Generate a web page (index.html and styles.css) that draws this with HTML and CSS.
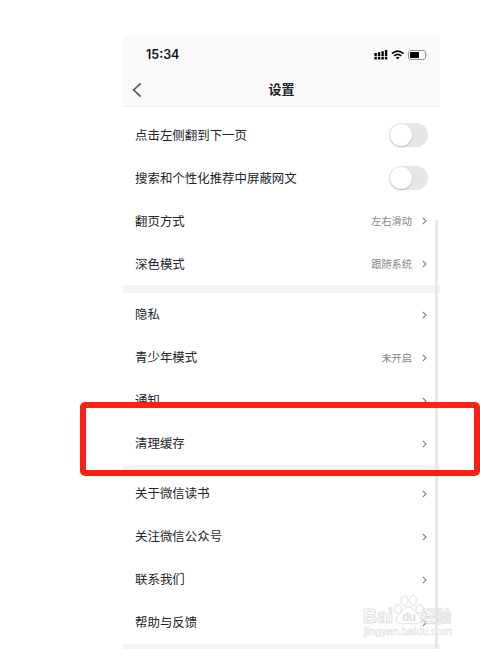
FILE: index.html
```html
<!DOCTYPE html>
<html lang="zh-CN">
  <head>
    <meta charset="UTF-8" />
    <meta name="viewport" content="width=device-width, initial-scale=1.0" />
    <title>设置</title>
    <link rel="stylesheet" href="styles.css">
  </head>
  <body>
    <div class="phone">
      <header class="header">
        <div class="status-bar">
          <span class="time">15:34</span>
          <svg class="status-icons" width="54" height="12" viewBox="0 0 54 12">
            <!-- signal -->
            <path d="M.4 4h2.400v3.200H.4zM3.900 3.200h2.400v4H3.900zM7.400 2.200h2.400v5H7.400zM10.900 1h2.400v6.200h-2.400zM.4 8h2.400v2.600H.4zM3.900 8h2.400v2.600H3.900zM7.400 8h2.400v2.600H7.400zM10.900 8h2.400v2.600h-2.400z" />
            <!-- wifi -->
            <g fill="none" stroke="#000" stroke-width="1.700">
              <path d="M18 4.600Q23.700-.2 29.400 4.600" />
              <path d="M20.200 6.900Q23.700 4 27.200 6.900" />
            </g>
            <path d="M21.700 8.300Q23.700 7 25.700 8.300L23.700 10.600z" />
            <!-- battery -->
            <rect x="34.500" y="1.500" width="17" height="9" rx="2.500" fill="#fff" stroke="#888" stroke-width=".9" />
            <rect x="36" y="3" width="9" height="6" rx=".8" />
            <path d="M52.600 4.500q1.200 1.500 0 3z" fill="#777" />
          </svg>
        </div>
        <div class="nav-bar">
          <svg class="back" width="10" height="16" viewBox="0 0 10 16">
            <path d="M8.700 1.300L1.700 8L8.700 14.700" />
          </svg>
          <h1>设置</h1>
        </div>
      </header>

      <main>
        <div class="group">
          <div class="row"><span>点击左侧翻到下一页</span><i class="switch"></i></div>
          <div class="row"><span>搜索和个性化推荐中屏蔽网文</span><i class="switch"></i></div>
          <div class="row"><span>翻页方式</span><span class="value">左右滑动</span><svg class="arrow" viewBox="0 0 5 8"><path d="M.8.8L4 4L.8 7.200" /></svg></div>
          <div class="row"><span>深色模式</span><span class="value">跟随系统</span><svg class="arrow" viewBox="0 0 5 8"><path d="M.8.8L4 4L.8 7.200" /></svg></div>
        </div>
        <div class="group">
          <div class="row"><span>隐私</span><svg class="arrow" viewBox="0 0 5 8"><path d="M.8.8L4 4L.8 7.200" /></svg></div>
          <div class="row"><span>青少年模式</span><span class="value">未开启</span><svg class="arrow" viewBox="0 0 5 8"><path d="M.8.8L4 4L.8 7.200" /></svg></div>
          <div class="row"><span>通知</span><svg class="arrow" viewBox="0 0 5 8"><path d="M.8.8L4 4L.8 7.200" /></svg></div>
          <div class="row"><span>清理缓存</span><svg class="arrow" viewBox="0 0 5 8"><path d="M.8.8L4 4L.8 7.200" /></svg></div>
        </div>
        <div class="group">
          <div class="row"><span>关于微信读书</span><svg class="arrow" viewBox="0 0 5 8"><path d="M.8.8L4 4L.8 7.200" /></svg></div>
          <div class="row"><span>关注微信公众号</span><svg class="arrow" viewBox="0 0 5 8"><path d="M.8.8L4 4L.8 7.200" /></svg></div>
          <div class="row"><span>联系我们</span><svg class="arrow" viewBox="0 0 5 8"><path d="M.8.8L4 4L.8 7.200" /></svg></div>
          <div class="row"><span>帮助与反馈</span><svg class="arrow" viewBox="0 0 5 8"><path d="M.8.8L4 4L.8 7.200" /></svg></div>
        </div>
      </main>
      <div class="scrollbar"></div>
    </div>

    <div class="highlight"></div>

    <svg class="watermark" width="96" height="46" viewBox="0 0 96 46">
      <g class="outline">
        <text x="1" y="28.500" font-size="20" textLength="30" lengthAdjust="spacingAndGlyphs">Bai</text>
        <ellipse cx="36" cy="15" rx="3.400" ry="4.300" />
        <ellipse cx="42.500" cy="6.500" rx="3.500" ry="4.800" />
        <ellipse cx="51" cy="6.500" rx="3.500" ry="4.800" />
        <ellipse cx="57.500" cy="15" rx="3.400" ry="4.300" />
        <path d="M46.500 13C41 13 40 18 36 22C31 28 36 31 46.500 29.500C57 31 62 28 57 22C53 18 52 13 46.500 13z" />
      </g>
      <text class="du" x="40" y="27" font-size="12" textLength="14">du</text>
      <text class="outline cn" x="58.500" y="28" font-size="15.500">经验</text>
      <text class="site" x="2" y="41" font-size="11" textLength="88" lengthAdjust="spacingAndGlyphs">jingyan.baidu.com</text>
    </svg>
  </body>
</html>
```

FILE: styles.css
```css
body {
  position: relative;
  height: 649px;
  margin: 0;
  overflow: hidden;
  background: #fff;
  color: #22242a;
  font-family: "Liberation Sans", "Noto Sans CJK SC", sans-serif;
}

.phone {
  position: relative;
  width: 317px;
  margin-left: 123px;
  padding-top: 36px;
}

/* Header */
.header {
  box-sizing: border-box;
  height: 71px;
  background: #fafafa;
  border-bottom: 1px solid #ececec;
}

.status-bar {
  display: flex;
  align-items: center;
  justify-content: space-between;
  height: 38px;
  padding: 0 12px 0 23px;
}

.time {
  font: 600 12.5px/38px Inter, sans-serif;
  color: #111;
}

.nav-bar {
  display: grid;
  grid-template-columns: 30px 1fr 30px;
  align-items: center;
  height: 32px;
}

.back {
  margin-left: 9px;
}

.back path,
.arrow path {
  fill: none;
  stroke: #555960;
  stroke-width: 1.7;
}

h1 {
  margin: 0;
  font-size: 13px;
  line-height: 32px;
  font-weight: 600;
  text-align: center;
}

/* Settings list */
.group {
  border-bottom: 8px solid #f3f4f6;
}

.group:first-child {
  padding-top: 6px;
}

.group:nth-child(2) {
  border-bottom-width: 7px;
}

.row {
  display: flex;
  align-items: center;
  height: 43px;
  padding: 0 12px;
  font-size: 12.45px;
  line-height: 41px;
}

.row span:first-child {
  flex: 1;
  padding-top: 2px;
}

.group:first-child .row span:first-child {
  padding-top: 4px;
}

.value {
  margin-right: 10px;
  padding-top: 2px;
  font-size: 10.2px;
  color: #85888e;
}

.arrow {
  width: 5px;
  height: 8px;
  margin-right: 1px;
}

.arrow path {
  stroke: #7c8085;
  stroke-width: 1.1;
}

.switch {
  box-sizing: border-box;
  width: 39px;
  height: 24px;
  padding: 1px;
  border-radius: 12px;
  background: #e6e6e6;
}

.switch::before {
  content: "";
  display: block;
  width: 22px;
  height: 22px;
  border-radius: 50%;
  background: #fff;
  box-shadow: 0 1px 2px rgba(0, 0, 0, 0.2);
}

.scrollbar {
  position: absolute;
  top: 220px;
  right: 2px;
  width: 3px;
  height: 440px;
  border-radius: 2px;
  background: #e8e8e9;
}

/* Red frame over the cache row */
.highlight {
  position: absolute;
  top: 402px;
  left: 80px;
  box-sizing: border-box;
  width: 400px;
  height: 74px;
  border: 6px solid #ff2011;
  border-radius: 5px;
}

.watermark {
  position: absolute;
  top: 594px;
  left: 362px;
  font-family: "Liberation Sans", "Noto Sans CJK SC", sans-serif;
  font-weight: bold;
}

.outline {
  fill: rgba(255, 255, 255, 0.6);
  stroke: #e0e0e0;
  stroke-width: 1;
}

.cn {
  fill: rgba(255, 255, 255, 0.4);
  stroke-width: 0.8;
}

.du {
  fill: #e0e0e0;
}

.site {
  fill: #fff;
  stroke: #e6e6e6;
  stroke-width: 0.7;
  font-weight: normal;
}
```
